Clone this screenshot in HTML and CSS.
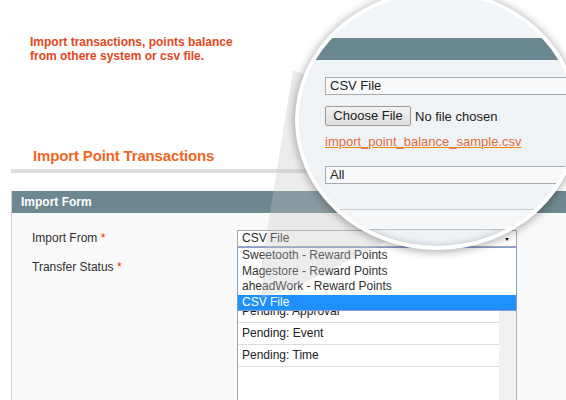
FILE: index.html
```html
<!DOCTYPE html>
<html>
<head>
<meta charset="utf-8">
<link rel="stylesheet" href="styles.css">
</head>
<body>
<div class="page">
  <p class="intro">Import transactions, points balance<br>from othere system or csv file.</p>
  <h2 class="title">Import Point Transactions</h2>
  <div class="rule"></div>
  <section class="fieldset">
    <div class="legend">Import Form</div>
    <div class="form-body">
      <div class="row">
        <label class="label">Import From <span class="req">*</span></label>
        <div class="field select-wrap">
          <div class="select">CSV File<span class="arrow"></span></div>
          <ul class="dropdown">
            <li>Sweetooth - Reward Points</li>
            <li>Magestore - Reward Points</li>
            <li>aheadWork - Reward Points</li>
            <li class="selected">CSV File</li>
          </ul>
        </div>
      </div>
      <div class="row">
        <label class="label list-label">Transfer Status <span class="req">*</span></label>
        <div class="field listbox">
          <ul class="options">
            <li class="hidden-row"></li>
            <li class="hidden-row"></li>
            <li>Pending: Approval</li>
            <li>Pending: Event</li>
            <li>Pending: Time</li>
          </ul>
          <div class="track"></div>
        </div>
      </div>
    </div>
  </section>
  <div class="cone"></div>
  <div class="lens">
    <div class="lens-head"></div>
    <div class="lens-bar"></div>
    <div class="lens-body">
      <div class="l-select">CSV File</div>
      <div class="l-file"><span class="l-button">Choose File</span><span class="l-nofile">No file chosen</span></div>
      <a class="l-link">import_point_balance_sample.csv</a>
      <div class="l-select l-select2">All</div>
      <div class="l-line"></div>
      <div class="l-band"></div>
    </div>
  </div>
</div>
</body>
</html>
```

FILE: styles.css
```css
* { box-sizing: border-box; }
html, body { margin: 0; padding: 0; background: #fff; }
body { font-family: "Liberation Sans", Arial, sans-serif; color: #333; overflow: hidden; }
.page { position: relative; width: 566px; height: 400px; overflow: hidden; }

.intro {
  margin: 0;
  padding: 36px 0 0 30px;
  font-size: 12px;
  line-height: 13.5px;
  font-weight: bold;
  color: #e4461c;
}
.title {
  margin: 84px 0 0 33px;
  font-size: 15px;
  line-height: 18px;
  font-weight: bold;
  color: #f1661f;
  letter-spacing: -0.15px;
}
.rule {
  margin: 4px 0 0 11px;
  height: 4px;
  background: #dedede;
}
.fieldset {
  margin: 18px 0 0 11px;
  border-left: 1px solid #d4d4d4;
}
.legend {
  height: 22px;
  line-height: 22px;
  padding-left: 9px;
  background: #6e8891;
  color: #fff;
  font-size: 12px;
  font-weight: bold;
}
.form-body {
  background: #f9f9f9;
  padding: 17px 0 0 20px;
  height: 200px;
  display: flex;
  flex-direction: column;
  gap: 10px;
}
.row { display: grid; grid-template-columns: 205px 280px; }
.label { font-size: 12px; line-height: 17px; color: #2f2f2f; }
.list-label { line-height: 21px; }
.req { color: #eb340a; }

.select-wrap { position: relative; z-index: 2; }
.select {
  height: 17px;
  border: 1px solid #a9a9a9;
  background: #fff;
  font-size: 12px;
  line-height: 15px;
  padding-left: 4px;
  color: #2a2a2a;
  position: relative;
}
.arrow {
  position: absolute;
  right: 7px;
  top: 7px;
  width: 0; height: 0;
  border-left: 2.5px solid transparent;
  border-right: 2.5px solid transparent;
  border-top: 3px solid #111;
}
.dropdown {
  position: absolute;
  top: 100%;
  left: 0; right: 0;
  margin: 0; padding: 0;
  list-style: none;
  background: #fff;
  border: 1px solid #7d9fd6;
}
.dropdown li {
  font-size: 12px;
  line-height: 15.5px;
  padding-left: 4px;
  color: #303030;
}
.dropdown li.selected { background: #1e90ff; color: #fff; }

.listbox {
  display: flex;
  height: 170px;
  border-left: 1px solid #a9a9a9;
  border-right: 1px solid #b4b4b4;
}
.options {
  flex: 1;
  margin: 0; padding: 0;
  list-style: none;
  background: #fff;
}
.options li {
  font-size: 12px;
  line-height: 21px;
  padding-left: 4px;
  border-bottom: 1px solid #dcdcdc;
  color: #222;
}
.options li.hidden-row { height: 22px; }
.track { width: 17px; background: #f0f0f0; }

.cone {
  position: absolute;
  left: 0; top: 0;
  width: 566px; height: 400px;
  z-index: 3;
  background: rgba(196, 196, 196, 0.32);
  clip-path: polygon(293px 70px, 262px 262px, 262px 298px, 300px 285px, 390px 240px, 420px 120px);
}

.lens {
  position: absolute;
  left: 295px;
  top: -10px;
  width: 284px;
  height: 260px;
  z-index: 4;
  border-radius: 50%;
  border: 4px solid #fff;
  overflow: hidden;
  background: #eef2f6;
  box-shadow: 0 1px 9px 1px rgba(0,0,0,0.32), inset 0 0 7px rgba(0,0,0,0.22);
}
.lens-head { height: 44px; background: #f3f6f9; }
.lens-bar { height: 22px; background: #6b8791; }
.lens-body {
  padding: 17px 0 0 26px;
  background: #eff3f6;
  font-size: 13px;
  color: #222;
}
.l-select {
  width: 320px;
  height: 18px;
  border: 1px solid #a8aaac;
  background: #f7f9fb;
  line-height: 16px;
  padding-left: 4px;
}
.l-file { margin-top: 11px; display: flex; align-items: center; height: 20px; }
.l-button {
  width: 86px;
  height: 20px;
  border: 1px solid #9c9c9c;
  border-radius: 2px;
  background: linear-gradient(#f3f3f3, #dedede);
  line-height: 18px;
  text-align: center;
  color: #222;
}
.l-nofile { margin-left: 4px; }
.l-link {
  display: block;
  margin-top: 8px;
  line-height: 16px;
  color: #e56a3a;
  text-decoration: underline;
  text-decoration-color: #f08012;
}
.l-select2 { margin-top: 16px; }
.l-line { margin: 25px 0 0 -26px; height: 1px; background: #c5c9cd; }
.l-band { margin-left: -26px; height: 20px; background: #f4f6f8; border-bottom: 1px solid #bfc3c7; }
```
